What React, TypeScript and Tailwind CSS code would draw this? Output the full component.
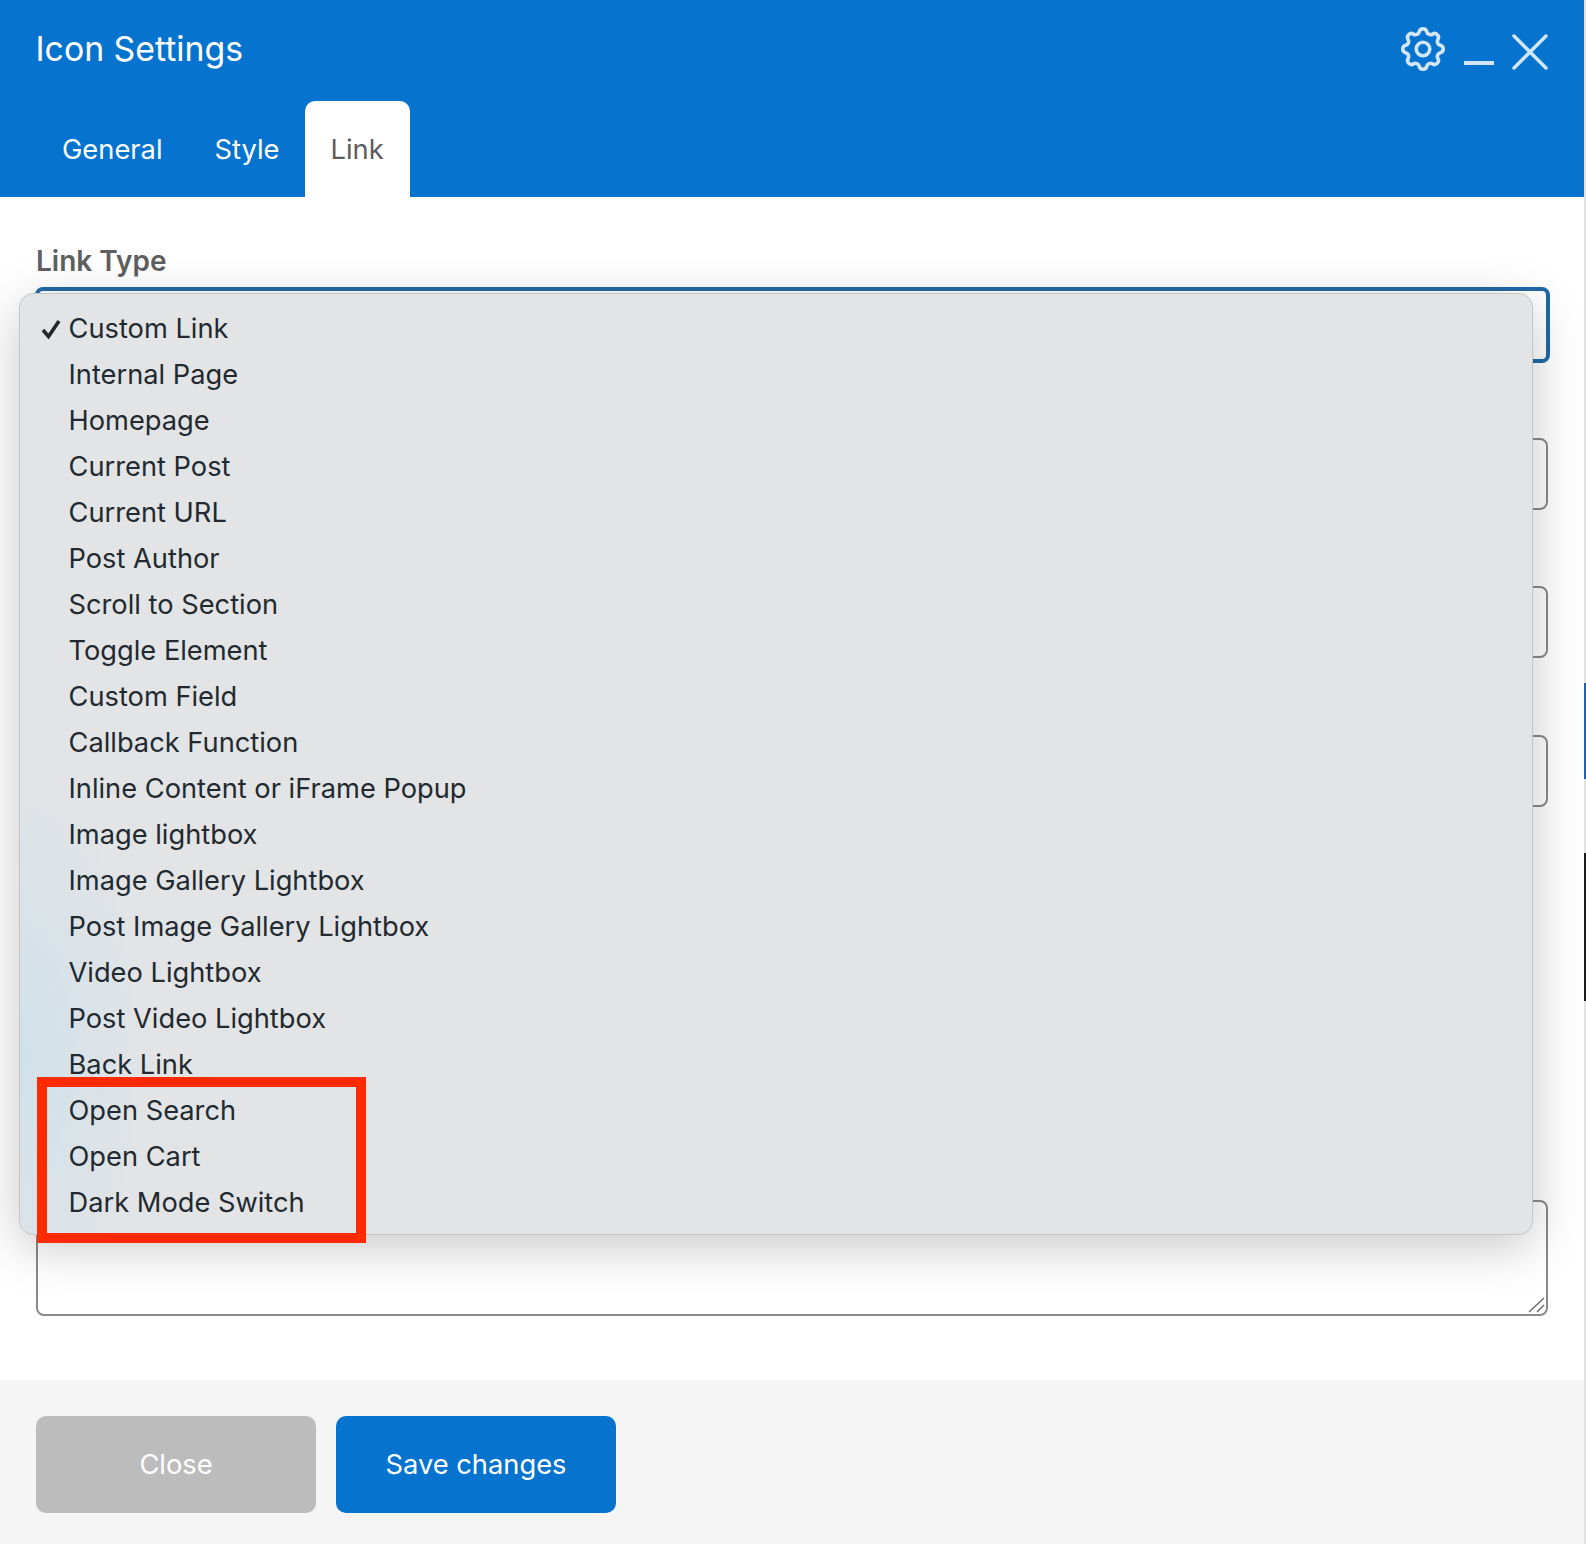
import React from "react";
import { TbSettings } from "react-icons/tb";

const items = [
  "Custom Link", "Internal Page", "Homepage", "Current Post", "Current URL", "Post Author",
  "Scroll to Section", "Toggle Element", "Custom Field", "Callback Function",
  "Inline Content or iFrame Popup", "Image lightbox", "Image Gallery Lightbox",
  "Post Image Gallery Lightbox", "Video Lightbox", "Post Video Lightbox", "Back Link",
  "Open Search", "Open Cart", "Dark Mode Switch",
];

export default function App() {
  return (
    <div className="relative flex h-[1544px] w-[1586px] overflow-hidden bg-white font-['Inter',sans-serif]">
      <div className="flex w-[1584px] flex-col">
        <header className="h-[197px] bg-[#0674ce]">
          <div className="flex h-[101px] items-start justify-between pr-[32px] pl-[35.5px]">
            <h1 className="mt-[27px] text-[33.8px] leading-[44px] font-normal text-white">Icon Settings</h1>
            <div className="flex items-start">
              <TbSettings className="mt-[22px] text-[#d3e6f8]" size={54} strokeWidth={1.6} />
              <svg width="38" height="12" viewBox="0 0 38 12" className="mt-[57px] ml-[10px]">
                <path d="M4 6H34" stroke="#d3e6f8" strokeWidth="4" />
              </svg>
              <svg width="44" height="44" viewBox="0 0 44 44" className="mt-[30px] ml-[10px]">
                <path d="M6 6L38 38M38 6L6 38" stroke="#d3e6f8" strokeWidth="3.4" strokeLinecap="round" />
              </svg>
            </div>
          </div>
          <nav className="flex h-[96px] pl-[36px] text-[27.3px]">
            <div className="flex items-center px-[26px] pt-[2px] text-white">General</div>
            <div className="flex items-center pt-[2px] pr-[25px] pl-[26px] text-white">Style</div>
            <div className="flex items-center rounded-t-[10px] bg-white px-[26px] pt-[2px] text-[#5c5c5c]">Link</div>
          </nav>
        </header>

        <main className="flex h-[1183px] flex-col px-[36px] pt-[44px]">
          <label className="h-[40px] text-[28px] leading-[40px] font-semibold text-[#5f5f5f]">Link Type</label>
          <div className="mt-[6px] -mr-[2px] -ml-[1px] h-[76px] rounded-lg border-4 border-[#1f6aa8] bg-white" />
          <input className="mt-[75px] h-[72px] rounded-lg border-2 border-[#8a8a8a]" />
          <input className="mt-[76px] h-[72px] rounded-lg border-2 border-[#8a8a8a]" />
          <input className="mt-[77px] h-[72px] rounded-lg border-2 border-[#8a8a8a]" />
          <textarea className="mt-[393px] h-[116px] resize-none rounded-lg border-2 border-[#8a8a8a] outline-none" />
        </main>

        <footer className="flex flex-1 gap-[20px] bg-[#f5f5f6] px-[36px] pt-[36px]">
          <button className="h-[97px] w-[280px] rounded-[10px] bg-[#bcbcbc] pt-[2px] text-[27.3px] text-white">Close</button>
          <button className="h-[97px] w-[280px] rounded-[10px] bg-[#0674ce] pt-[2px] text-[27.3px] text-white">Save changes</button>
        </footer>
      </div>

      <div className="flex w-[2px] flex-col bg-[#e2e2e2]">
        <div className="mt-[683px] h-[96px] bg-[#1f62b5]" />
        <div className="mt-[74px] h-[148px] bg-[#1c1c1c]" />
      </div>

      <svg width="20" height="20" viewBox="0 0 20 20" className="absolute top-[1296px] left-[1527px]">
        <path d="M2 16L17 2M10 16L17 9" stroke="#6f6f6f" strokeWidth="1.5" />
      </svg>

      <div className="absolute top-[293px] left-[19px] h-[942px] w-[1514px] rounded-[14px] border border-[#c4c5c7] bg-[#e3e4e6] bg-[radial-gradient(ellipse_130px_300px_at_0px_760px,#d0e1ea,transparent)] pt-[12px] text-[27.25px] leading-[46px] text-[#222a30] shadow-[0_12px_50px_rgba(0,0,0,0.22)]">
        {items.map((item, i) => (
          <div key={item} className="relative h-[46px] pl-[48.5px]">
            {i === 0 && (
              <svg width="22" height="22" viewBox="0 0 22 22" className="absolute top-[12px] left-[20px]">
                <path d="M3 12L8.5 18.5L19 3" fill="none" stroke="#23282d" strokeWidth="3.6" />
              </svg>
            )}
            {item}
          </div>
        ))}
      </div>

      <div className="absolute top-[1077px] left-[37px] h-[166px] w-[329px] border-[10px] border-[#ff2a00]" />
    </div>
  );
}
